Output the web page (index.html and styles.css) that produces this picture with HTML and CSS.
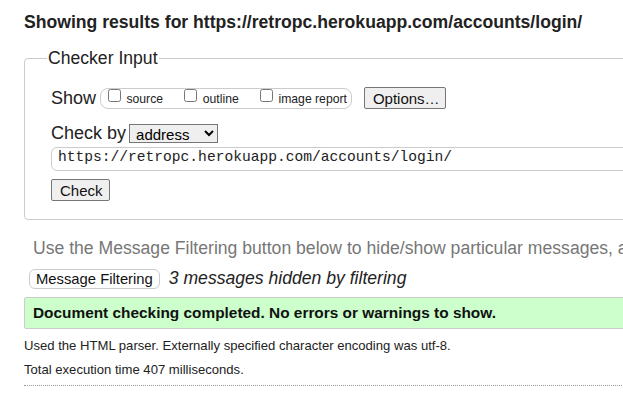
FILE: index.html
```html
<!DOCTYPE html>
<html lang="en">
<head>
<meta charset="utf-8">
<title>Nu Html Checker</title>
<link rel="stylesheet" href="styles.css">
</head>
<body>
<div class="page">
  <h2 class="title">Showing results for https://retropc.herokuapp.com/accounts/login/</h2>
  <form class="checker">
    <fieldset class="fs">
      <legend class="legend">Checker Input</legend>
      <div class="row show-row">
        <span class="lbl">Show</span>
        <span class="group">
          <label class="opt"><input type="checkbox"> source</label>
          <label class="opt"><input type="checkbox"> outline</label>
          <label class="opt"><input type="checkbox"> image report</label>
        </span>
        <button type="button" class="btn btn-options">Options…</button>
      </div>
      <div class="row checkby-row">
        <span class="lbl">Check by</span>
        <select class="sel"><option>address</option></select>
      </div>
      <div class="url">https://retropc.herokuapp.com/accounts/login/</div>
      <div class="row"><button type="button" class="btn btn-check">Check</button></div>
    </fieldset>
  </form>
  <p class="hint">Use the Message Filtering button below to hide/show particular messages, and to see total counts of errors and warnings.</p>
  <div class="filter-row">
    <button type="button" class="btn-filter">Message Filtering</button>
    <span class="hidden-count">3 messages hidden by filtering</span>
  </div>
  <p class="success">Document checking completed. No errors or warnings to show.</p>
  <p class="stats">Used the HTML parser. Externally specified character encoding was utf-8.</p>
  <p class="stats">Total execution time 407 milliseconds.</p>
  <hr class="dotted">
</div>
</body>
</html>
```

FILE: styles.css
```css
html, body {
  margin: 0;
  padding: 0;
  background: #fff;
  overflow: hidden;
}
body {
  font-family: "Liberation Sans", Arial, sans-serif;
  color: #222;
}
.page {
  width: 1000px;
  padding: 0 0 0 24px;
}
.title {
  margin: 0;
  padding-top: 11px;
  font-size: 17.6px;
  line-height: 22px;
  font-weight: bold;
  color: #222;
}
.checker {
  margin-top: 15px;
}
.fs {
  margin: 0;
  border: 1px solid #ccc;
  border-radius: 4px;
  padding: 6px 0 18px 26px;
}
.legend {
  font-size: 17.6px;
  padding: 0 1px;
  margin-left: -4px;
  color: #222;
}
.row {
  display: flex;
  align-items: center;
}
.lbl {
  font-size: 18px;
  margin-right: 4px;
}
.show-row {
  margin-top: 12px;
}
.group {
  display: inline-block;
  border: 1px solid #ccc;
  border-radius: 8px;
  height: 19px;
  line-height: 17px;
  padding: 0 4px 0 4px;
  font-size: 12.2px;
  white-space: nowrap;
}
.opt {
  margin-right: 15px;
}
.opt:last-child { margin-right: 0; }
.opt input {
  margin: 0 2px 0 3px;
  width: 13px;
  height: 13px;
  vertical-align: 1px;
}
.btn {
  font-family: "Liberation Sans", Arial, sans-serif;
  font-size: 15px;
  background: #efefef;
  border: 1px solid #767676;
  border-radius: 2px;
  color: #111;
  height: 22px;
  padding: 0 8px;
}
.btn-options {
  margin-left: 12px;
  width: 82px;
}
.checkby-row {
  margin-top: 14px;
}
.checkby-row .lbl {
  margin-right: 3px;
}
.sel {
  font-family: "Liberation Sans", Arial, sans-serif;
  font-size: 15px;
  height: 19px;
  width: 89px;
  border: 1px solid #767676;
  border-radius: 0;
  padding: 0 0 0 2px;
}
.url {
  margin-top: 3px;
  border: 1px solid #ccc;
  border-radius: 6px;
  height: 22px;
  line-height: 18px;
  font-family: "Liberation Mono", "Courier New", monospace;
  font-size: 14.6px;
  padding-left: 6px;
  color: #222;
}
.btn-check {
  margin-top: 8px;
  width: 59px;
}
.hint {
  margin: 17px 0 0 9px;
  font-size: 17.6px;
  color: #777;
  white-space: nowrap;
  line-height: 22px;
}
.filter-row {
  display: flex;
  align-items: center;
  margin: 9px 0 0 5px;
}
.btn-filter {
  font-family: "Liberation Sans", Arial, sans-serif;
  font-size: 14.8px;
  background: #fff;
  border: 1px solid #ccc;
  border-radius: 6px;
  height: 20px;
  padding: 0 6px;
  color: #111;
}
.hidden-count {
  font-style: italic;
  font-size: 17.6px;
  margin-left: 9px;
  color: #222;
}
.success {
  margin: 8px 0 0 0;
  background: #ccffcc;
  border: 1px solid #ccc;
  border-radius: 2px;
  font-weight: bold;
  font-size: 15.4px;
  line-height: 30px;
  padding-left: 8px;
  color: #111;
}
.stats {
  margin: 9px 0 0 0;
  font-size: 13.1px;
  line-height: 16px;
  color: #222;
}
.stats + .stats {
  margin-top: 8px;
}
.dotted {
  margin: 7px 0 0 0;
  border: 0;
  border-top: 1px dotted #999;
}
```
